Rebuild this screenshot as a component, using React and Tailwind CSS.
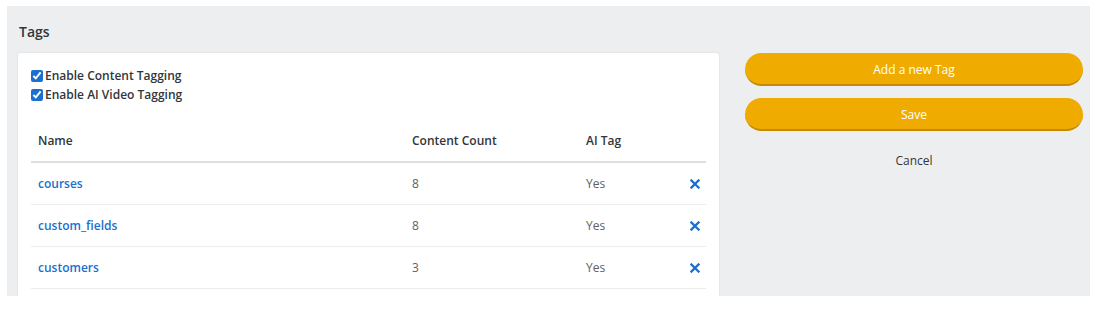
import React from "react";

const rows = [
  { name: "courses", count: "8", ai: "Yes" },
  { name: "custom_fields", count: "8", ai: "Yes" },
  { name: "customers", count: "3", ai: "Yes" },
];

function XIcon() {
  return (
    <svg width="10" height="10" viewBox="0 0 10 10">
      <path d="M1.5 1.5 L8.5 8.5 M8.5 1.5 L1.5 8.5" stroke="#1a6fd0" strokeWidth="2.3" strokeLinecap="square" />
    </svg>
  );
}

export default function App() {
  return (
    <div className="w-[1099px] h-[309px] bg-white pt-[6px] pl-[7px]" style={{ fontFamily: '"Open Sans", "Noto Sans", sans-serif' }}>
      <div className="w-[1083px] h-[290px] bg-[#edeef0] overflow-hidden pt-[16px]">
        <div className="pl-[12px] h-[20px] leading-[20px] text-[14px] font-semibold text-[#32363a]">Tags</div>
        <div className="flex mt-[11px] pl-[11px]">
          <div className="w-[701px] h-[260px] bg-white rounded-[3px] shadow-[0_0_2px_rgba(0,0,0,0.12)] px-[13px] pt-[13px] shrink-0">
            <label className="flex items-center h-[19px] gap-[2px] text-[12px] font-semibold text-[#32363a]">
              <input type="checkbox" defaultChecked className="w-[12px] h-[12px] m-0 accent-[#1a6fd0]" />
              <span>Enable Content Tagging</span>
            </label>
            <label className="flex items-center h-[19px] gap-[2px] text-[12px] font-semibold text-[#32363a]">
              <input type="checkbox" defaultChecked className="w-[12px] h-[12px] m-0 accent-[#1a6fd0]" />
              <span>Enable AI Video Tagging</span>
            </label>
            <div className="mt-[17px] text-[12px]">
              <div className="flex items-center h-[42px] border-b-2 border-[#dcdee0] font-semibold text-[#32363a]">
                <div className="w-[374px] pl-[7px]">Name</div>
                <div className="w-[174px] pl-[7px]">Content Count</div>
                <div className="flex-1 pl-[7px]">AI Tag</div>
              </div>
              {rows.map((r) => (
                <div key={r.name} className="flex items-center h-[42px] border-b border-[#ebeced]">
                  <div className="w-[374px] pl-[7px] font-semibold text-[#1a6fd0]">{r.name}</div>
                  <div className="w-[174px] pl-[7px] text-[#5d6165]">{r.count}</div>
                  <div className="flex-1 pl-[7px] text-[#5d6165]">{r.ai}</div>
                  <div className="w-[20px] mr-[1px] flex justify-center"><XIcon /></div>
                </div>
              ))}
            </div>
          </div>
          <div className="ml-[26px] w-[338px] flex flex-col">
            <button className="h-[33px] pt-[2px] rounded-full bg-[#f0ab00] border-b-2 border-[#c48a00] text-white text-[12px]">Add a new Tag</button>
            <button className="mt-[12px] h-[33px] pt-[2px] rounded-full bg-[#f0ab00] border-b-2 border-[#c48a00] text-white text-[12px]">Save</button>
            <button className="mt-[12px] h-[34px] pt-[2px] rounded-[6px] bg-[#eceef0] text-[#32363a] text-[12px]">Cancel</button>
          </div>
        </div>
      </div>
    </div>
  );
}
